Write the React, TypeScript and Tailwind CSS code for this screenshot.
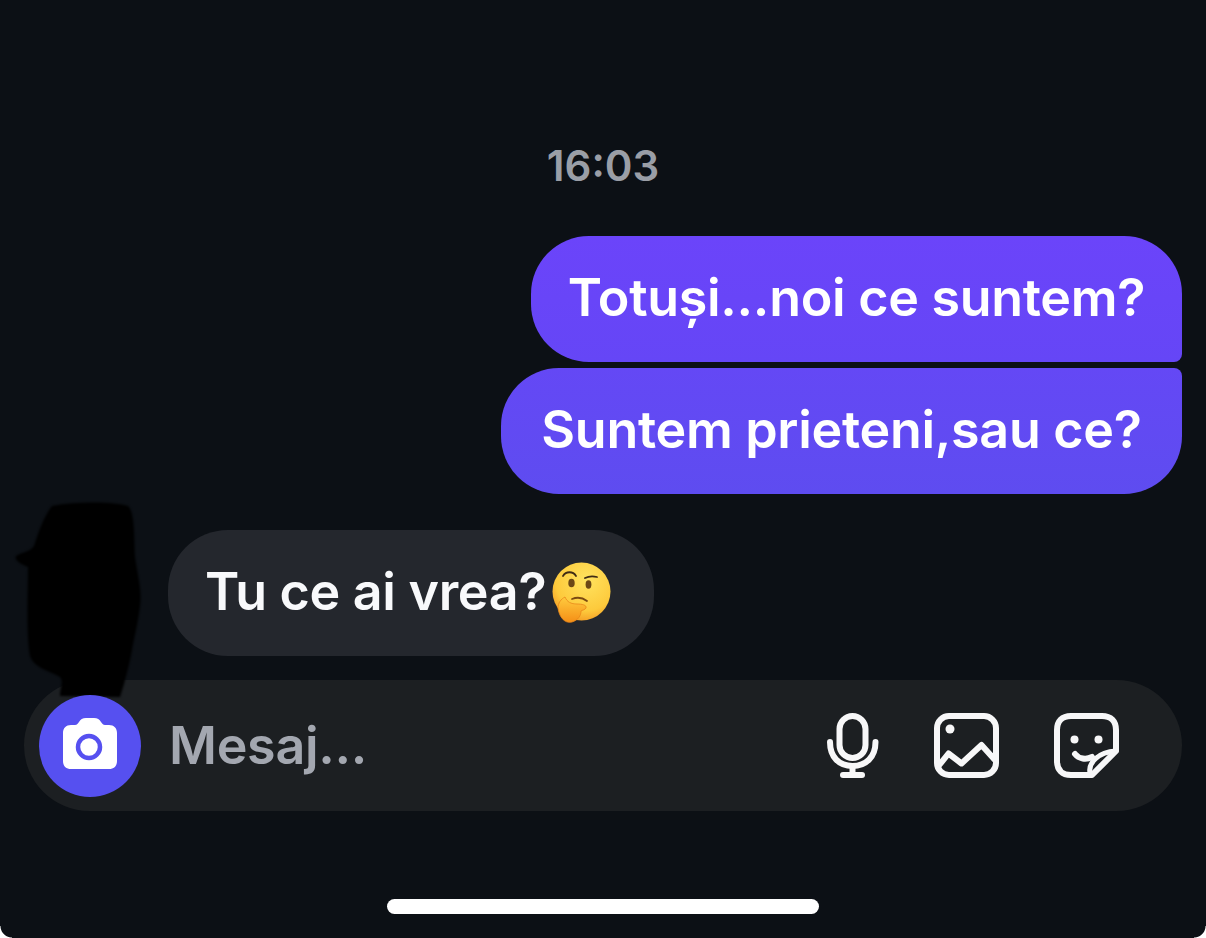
const font = { fontFamily: "Inter, 'Noto Sans', sans-serif" };

function Blot() {
  return (
    <svg className="absolute left-[10px] top-[498px] blur-[1px]" width="136" height="200" viewBox="0 0 136 200">
      <path
        d="M42 8 C70 3 105 4 118 8 C125 14 124 40 125 59 C128 80 132 92 130 108 C128 125 124 140 122 152 C119 168 116 178 114 186 L110 199 L50 198 C50 190 54 184 50 179 C38 172 24 170 20 158 C16 135 18 95 18 69 C10 66 4 62 6 58 C12 54 20 54 24 48 C28 35 34 18 42 8 Z"
        fill="#000000"
      />
    </svg>
  );
}

function ThinkingEmoji() {
  return (
    <svg width="60" height="62" viewBox="0 0 60 62" className="shrink-0">
      <defs>
        <radialGradient id="face" cx="58%" cy="30%" r="78%">
          <stop offset="0%" stopColor="#ffe35f" />
          <stop offset="68%" stopColor="#fdca3c" />
          <stop offset="100%" stopColor="#f2921f" />
        </radialGradient>
        <linearGradient id="hand" x1="0" y1="0" x2="0" y2="1">
          <stop offset="0%" stopColor="#ffcb3e" />
          <stop offset="100%" stopColor="#f58f16" />
        </linearGradient>
      </defs>
      <circle cx="30.500" cy="29.500" r="29" fill="url(#face)" />
      <path d="M12 14 C15 9 22 9 25 14" fill="none" stroke="#3f2a14" strokeWidth="1.800" strokeLinecap="round" />
      <path d="M34 16 C38 14 42 14 46 15" fill="none" stroke="#3f2a14" strokeWidth="1.800" strokeLinecap="round" />
      <ellipse cx="20.500" cy="21" rx="3.200" ry="4.300" fill="#6b4716" />
      <ellipse cx="37.500" cy="22.500" rx="2.900" ry="4.200" fill="#6b4716" />
      <path d="M21 37 C26 35 32 36 36 39" fill="none" stroke="#7a4a12" strokeWidth="1.800" strokeLinecap="round" />
      <path
        d="M7 46 C7 41 10 37 14 35 C16 40 20 42 26 42 C31 42 36 43 35 46 C34 48 31 48 30 49 C30 54 27 58 21 60 C13 62 8 54 7 46 Z"
        fill="url(#hand)"
        stroke="#e8861a"
        strokeWidth="0.800"
      />
    </svg>
  );
}

function CameraIcon() {
  return (
    <svg className="mb-[3px]" width="56" height="52" viewBox="0 0 56 52">
      <path
        d="M9 7 H13 C15 7 16 5.500 17 4 C18.500 1.500 20.500 0 24 0 H32 C35.500 0 37.500 1.500 39 4 C40 5.500 41 7 43 7 H47 C52 7 55 10 55 15 V43 C55 48 52 51 47 51 H9 C4 51 1 48 1 43 V15 C1 10 4 7 9 7 Z"
        fill="#ffffff"
      />
      <circle cx="27" cy="29" r="11" fill="#ffffff" stroke="#5650f0" strokeWidth="4.500" />
    </svg>
  );
}

function MicIcon() {
  return (
    <svg width="52" height="65" viewBox="0 0 52 65" fill="none" stroke="#f7f7f8" strokeWidth="6" strokeLinecap="round">
      <rect x="12.500" y="3" width="26" height="42" rx="13" />
      <path d="M3 29 C3 44 12 53 25.500 53 C39 53 48.500 44 48.500 29" />
      <path d="M25.500 53 V61" />
      <path d="M16 62 H35" />
    </svg>
  );
}

function ImageIcon() {
  return (
    <svg width="65" height="65" viewBox="0 0 65 65" fill="none" stroke="#f7f7f8" strokeWidth="6" strokeLinejoin="round">
      <rect x="3" y="3" width="59" height="59" rx="12" />
      <circle cx="16" cy="16" r="4.500" fill="#f7f7f8" stroke="none" />
      <path d="M4.500 53 L14.500 40.500 L27.500 50.500 L47.500 32 L61 47" />
    </svg>
  );
}

function StickerIcon() {
  return (
    <svg width="65" height="65" viewBox="0 0 65 65" fill="none" stroke="#f7f7f8" strokeWidth="6" strokeLinecap="round" strokeLinejoin="round">
      <path d="M38 62 H17 C8 62 3 57 3 48 V17 C3 8 8 3 17 3 H48 C57 3 62 8 62 17 V38 Z" />
      <circle cx="20.500" cy="26.500" r="4" fill="#f7f7f8" stroke="none" />
      <circle cx="44.500" cy="26.500" r="4" fill="#f7f7f8" stroke="none" />
      <path d="M21 41 C25 46 32 47 38 44" />
      <path d="M36 60 C34 50 44 39 62 38" strokeWidth="5" />
    </svg>
  );
}

export default function App() {
  return (
    <div className="relative flex h-[938px] w-[1206px] flex-col overflow-hidden bg-[#0c1015] text-[52px] font-semibold tracking-[-0.3px] text-[#f8f9fb]" style={font}>
      <div className="mt-[140px] flex h-[50px] items-center justify-center text-[42px] tracking-normal text-[#9a9ea6]">16:03</div>

      <div className="mt-[46px] flex flex-col items-end gap-[6px] pr-[24px]">
        <div className="flex h-[126px] w-[651px] items-center justify-center rounded-[58px] rounded-br-[8px] bg-gradient-to-b from-[#6b44fa] to-[#6546f6] pb-[3px] text-white">
          Totuși...noi ce suntem?
        </div>
        <div className="flex h-[126px] w-[681px] items-center justify-center rounded-[58px] rounded-tr-[8px] bg-gradient-to-b from-[#6448f5] to-[#5e4cf0] pb-[2px] text-white">
          Suntem prieteni,sau ce?
        </div>
      </div>

      <div className="mt-[36px] pl-[168px]">
        <div className="flex h-[126px] w-[486px] items-center gap-[5px] rounded-[60px] bg-[#24272d] pl-[37px]">
          <span className="pb-[2px]">Tu ce ai vrea?</span>
          <ThinkingEmoji />
        </div>
      </div>

      <div className="mx-[24px] mt-[24px] flex h-[131px] items-center rounded-[66px] bg-[#1c1f22] pl-[15px] pr-[63px]">
        <div className="relative z-10 flex h-[102px] w-[102px] shrink-0 items-center justify-center rounded-full bg-[#5650f0]">
          <CameraIcon />
        </div>
        <div className="ml-[28px] flex-1 text-[#a3a7b0]">Mesaj...</div>
        <div className="flex items-center gap-[55px]">
          <MicIcon />
          <ImageIcon />
          <StickerIcon />
        </div>
      </div>

      <div className="mt-[88px] h-[15px] w-[432px] self-center rounded-full bg-white" />

      <Blot />
      <div className="absolute bottom-0 left-0 h-[12px] w-[12px] bg-[radial-gradient(circle_at_top_right,transparent_11px,#ffffff_12px)]" />
      <div className="absolute bottom-0 right-0 h-[12px] w-[12px] bg-[radial-gradient(circle_at_top_left,transparent_11px,#ffffff_12px)]" />
    </div>
  );
}
